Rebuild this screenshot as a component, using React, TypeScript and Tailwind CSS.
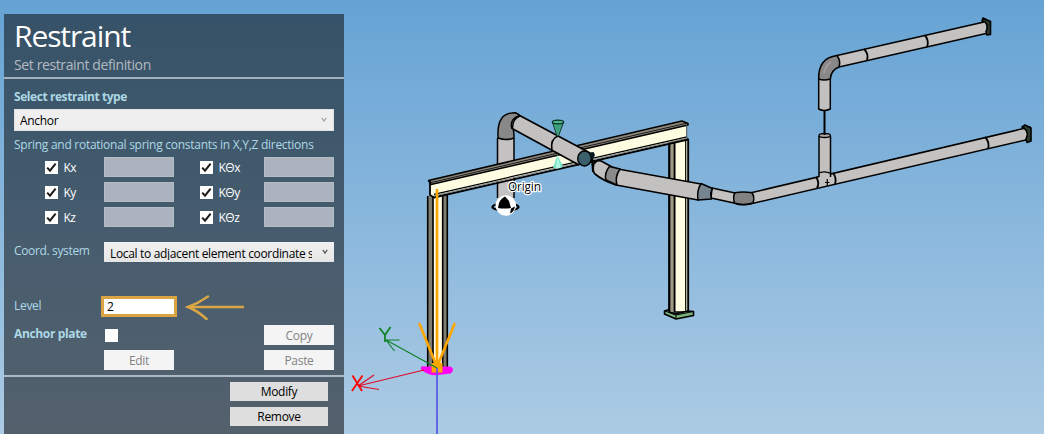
import React from "react";

function CheckBox({ checked = false }: { checked?: boolean }) {
  return (
    <span className="flex h-[13px] w-[13px] shrink-0 items-center justify-center bg-white">
      {checked && (
        <svg width="11" height="11" viewBox="0 0 11 11" fill="none" stroke="#1c1c1c" strokeWidth="2">
          <path d="M1.2 5.6 L4 8.6 L9.6 1.6" />
        </svg>
      )}
    </span>
  );
}

function SpringRow({ axis }: { axis: string }) {
  return (
    <div className="grid h-5 grid-cols-[90px_70px_90px_70px] items-center text-[12px] text-white">
      <span className="flex items-center gap-[6px] pl-[30.5px]">
        <CheckBox checked />
        <span className="pt-[2px] tracking-[-0.6px]">{"K" + axis}</span>
      </span>
      <span className="h-5 border border-[#b4bcc4] bg-[#abb4be]" />
      <span className="flex items-center gap-[6px] pl-[25.5px]">
        <CheckBox checked />
        <span className="pt-[2px] tracking-[-0.5px]">{"KΘ" + axis}</span>
      </span>
      <span className="h-5 border border-[#b4bcc4] bg-[#abb4be]" />
    </div>
  );
}

function Chevron({ color }: { color: string }) {
  return (
    <svg className="shrink-0" width="6" height="6" viewBox="0 0 6 6" fill="none" stroke={color} strokeWidth="1.2">
      <path d="M0.8 0.8 L3 4.2 L5.2 0.8" />
    </svg>
  );
}

function SmallButton({ label }: { label: string }) {
  return (
    <button className="flex h-5 w-[70px] items-center justify-center bg-[#f4f4f4] pt-[1px] text-[12px] tracking-[-0.3px] text-[#838383]">
      {label}
    </button>
  );
}

function Panel() {
  return (
    <section className="mt-[14px] ml-1 flex h-[420px] w-[340px] shrink-0 flex-col bg-linear-to-b from-[#365268] via-[#465c6e] to-[#54616d]">
      <header className="h-[63px] pl-[10px]">
        <h1 className="h-[42px] text-[30px] leading-[43px] tracking-[-1.1px] text-white">Restraint</h1>
        <p className="text-[14px] leading-[17px] tracking-[-0.38px] text-[#b3bac1]">Set restraint definition</p>
      </header>
      <div className="h-[2px] shrink-0 bg-[#a4b1bd]" />

      <div className="h-[296px] px-[10px] text-[#add8e6]">
        <h2 className="pt-[9px] text-[12px] leading-[18px] font-bold tracking-[-0.43px]">Select restraint type</h2>
        <div className="mt-[3px] flex h-[22px] items-center justify-between border border-[#e0e2e4] bg-[#efefef] pr-[6px] pl-[5px] text-[12px] text-black">
          <span className="pt-[2px] tracking-[-0.3px]">Anchor</span>
          <Chevron color="#a8a8a8" />
        </div>
        <p className="h-[26px] pt-[5px] text-[12px] leading-[18px] tracking-[-0.27px] whitespace-nowrap">
          Spring and rotational spring constants in X,Y,Z directions
        </p>
        <div className="flex flex-col gap-[5px]">
          <SpringRow axis="x" />
          <SpringRow axis="y" />
          <SpringRow axis="z" />
        </div>
        <div className="mt-[15px] grid h-5 grid-cols-[90px_230px]">
          <span className="text-[12px] leading-[18px] tracking-[-0.35px]">Coord. system</span>
          <div className="flex h-5 items-center justify-between bg-linear-to-b from-[#f1f1f1] to-[#e5e5e5] pr-[6px] pl-[6px] text-black">
            <span className="h-[15px] w-[202px] overflow-hidden text-[12px] leading-[18px] tracking-[-0.33px] whitespace-nowrap">
              Local to adjacent element coordinate system
            </span>
            <Chevron color="#555555" />
          </div>
        </div>
        <div className="mt-[33px] flex h-[23px] items-center">
          <span className="w-[87px] pb-[1px] text-[12px] leading-[18px] tracking-[-0.3px]">Level</span>
          <div className="flex h-[21px] w-[76px] items-center border-[3px] border-[#d9a441] bg-white pl-[3px] text-[12px] text-black">
            2
          </div>
          <svg className="ml-[8px]" width="60" height="28" viewBox="0 0 60 28" fill="none" stroke="#daa645" strokeWidth="2.5" strokeLinecap="round">
            <path d="M3 14 H58 M23 3.500 Q13 10.500 3 14 Q13 18 21.500 26" />
          </svg>
        </div>
        <div className="mt-[7px] grid h-5 grid-cols-[91px_159px_70px]">
          <span className="text-[12px] leading-[18px] font-bold tracking-[-0.35px]">Anchor plate</span>
          <span className="pt-1"><CheckBox /></span>
          <SmallButton label="Copy" />
        </div>
        <div className="mt-[5px] flex justify-between pl-[90px]">
          <SmallButton label="Edit" />
          <SmallButton label="Paste" />
        </div>
      </div>
      <div className="h-[2px] shrink-0 bg-[#adb8c5]" />
      <footer className="flex flex-col items-end gap-[6px] pt-[5px] pr-4 text-[12px] tracking-[-0.3px] text-black">
        <button className="flex h-[19px] w-[98px] items-center justify-center bg-[#dedede] pt-[1px]">Modify</button>
        <button className="flex h-[19px] w-[98px] items-center justify-center bg-[#dedede] pt-[1px]">Remove</button>
      </footer>
    </section>
  );
}

function Scene() {
  return (
    <svg className="block shrink-0" width="700" height="434" viewBox="344 0 700 434" strokeLinejoin="round">
      {/* riser below the start elbow */}
      <path d="M497.500 138 H514 V207 H497.500 Z" fill="#c3c1c1" />
      <path d="M497.500 138 V198 M514 138 V198" stroke="#000" strokeWidth="1.500" />

      {/* right column */}
      <path d="M669 143 L688 139 V312 H669 Z" fill="#fffde1" stroke="#000" strokeWidth="1.500" />
      <path d="M669.500 143 H675 V312 H669.500 Z" fill="#c9c3ad" />
      <path d="M669.500 143 V312 M674.500 142 V312" stroke="#000" strokeWidth="2" />
      <path d="M672 143 V312" stroke="#54503f" strokeWidth="0.700" />
      <path d="M685.700 139 V311 M688.500 139 V310" stroke="#000" strokeWidth="1.200" />
      <path d="M664.500 311 L669 309.500 V312 L675 314 L688 311 L693.500 311.500 V315.500 L676 319 L664.500 314 Z" fill="#79b07b" stroke="#000" strokeWidth="1.600" />
      <path d="M665 311 L676 315 L693 311.500 M676 315 V319" fill="none" stroke="#000" strokeWidth="1" />

      {/* left column */}
      <path d="M427.500 196 H447.500 V369 H427.500 Z" fill="#fffbe0" />
      <path d="M428 196 H433 V369 H428 Z M443 196 H447 V369 H443 Z" fill="#7f7c70" />
      <path d="M427.700 196 V369 M433 196 V369 M442.700 195 V369 M447.300 194 V369" stroke="#000" strokeWidth="1.600" />

      {/* beam */}
      <path d="M429.500 181 L686.500 124 V138 L430 196.500 Z" fill="#fffde1" />
      <path d="M428.500 180.500 L682 121 L688 123.500 V125 L431 184.500 Z" fill="#8b877c" stroke="#000" strokeWidth="1.500" />
      <path d="M430 182.800 L686 123.300" stroke="#000" strokeWidth="0.800" />
      <path d="M430 181 V195 L434 197.500 L688 139.500" fill="none" stroke="#000" strokeWidth="1.800" />
      <path d="M434 194.300 L687 136.800" stroke="#000" strokeWidth="1.200" />
      <path d="M434 195.900 L687 138.300" stroke="#8b877c" strokeWidth="0.900" />
      <path d="M686.700 125 V138" stroke="#55524a" strokeWidth="1" />

      {/* lower restraint cone */}
      <path d="M557.500 155 L553 167.500 Q558 170 563 166.500 Z" fill="#7ae8cc" />
      <path d="M557.500 155 L556 168.500 L560.500 168 Z" fill="#b4f6e6" />

      {/* start elbow and descending pipe */}
      <path d="M516 113 L590 153 L583 166 L579 164 L511 128 Z" fill="#c3c0c0" />
      <path d="M515 113 L590 153 M513 129 L579 165" stroke="#000" strokeWidth="1.700" />
      <path d="M498 138 V131 Q499 114 512 113 Q517 112 520 116 Q513 118 512.500 128 Q514 130 514 138 Q506 141 498 138 Z" fill="#888" stroke="#000" strokeWidth="1.500" />
      <path d="M520 115.500 Q509 119 512 129" fill="none" stroke="#000" strokeWidth="1.500" />
      <path d="M558 136 Q550 139 552 150" fill="none" stroke="#000" strokeWidth="1.500" />
      <ellipse cx="584.500" cy="158.500" rx="6.800" ry="7.500" fill="#3b606b" stroke="#000" strokeWidth="1.400" />
      <path d="M589 152.500 L593.500 152 L595 155 L592.500 160 L590 157 Z" fill="#07191c" />

      {/* upper restraint cone */}
      <path d="M552.500 122.500 L557 136 H558.500 L563.500 122.500 Z" fill="#3fa17d" stroke="#193e31" strokeWidth="1" />
      <ellipse cx="558" cy="122" rx="5.700" ry="1.900" fill="#4db48d" stroke="#082c20" strokeWidth="1.200" />

      {/* pipe toward the reducer */}
      <path d="M594 163 Q598 159 603 162 L612 167 L618 169 L701 184 L698 200 L616 185 Q602 180 595 174 Q592 171 594 163 Z" fill="#c3c0c0" stroke="#000" strokeWidth="1.700" />
      <path d="M609.500 166.500 L620 169 Q614.500 177 617 185 L606 180 Q604 173 609.500 166.500 Z" fill="#8b8a8b" stroke="#000" strokeWidth="1.500" />
      <path d="M592 159 L593 172" stroke="#000" strokeWidth="2" />
      <path d="M591 160 L596 163" stroke="#000" strokeWidth="2" />

      {/* reducer, bend and main run */}
      <path d="M712 188 L735 193 H750 L1030 127 V139 L750 204 Q742 206 734 203 L711 198 Z" fill="#c4c1c1" stroke="#000" strokeWidth="1.600" />
      <path d="M701 183.500 L712.500 188.500 Q709.500 193 711.500 199 L698 200 Q696.500 191 701 183.500 Z" fill="#778591" stroke="#000" strokeWidth="1.500" />
      <path d="M735 192.700 Q743 191.500 752 192.700 Q755 197 753 203 Q743 206 734.500 203 Q732.500 197 735 192.700 Z" fill="#838282" stroke="#000" strokeWidth="1.500" />
      <path d="M985 137 Q990 142 988 149 M816 177 Q820 183 817 188 M833 173 Q837 178 835 184" fill="none" stroke="#000" strokeWidth="1.800" />
      <path d="M1022 127 L1025 125 L1031 128 V141 L1027 142.500 L1026 139 Q1029 133 1025 129 Z" fill="#293c2d" stroke="#000" strokeWidth="1.600" />

      {/* vertical branch */}
      <path d="M819 136 V179 H830 V136 Z" fill="#c2bfbf" />
      <path d="M819 136 V177 M830.500 136 V177" stroke="#000" strokeWidth="1.500" />
      <path d="M819 173 Q825 170.500 831 173.500" fill="none" stroke="#000" strokeWidth="1.300" />
      <ellipse cx="824.700" cy="135.500" rx="5.700" ry="2" fill="#aaa8a8" stroke="#000" strokeWidth="1.300" />
      <path d="M824.500 111 V135" stroke="#000" strokeWidth="2" />
      <path d="M827.300 179 V186 M825 182.500 H829.500" stroke="#000" strokeWidth="1.200" />

      {/* upper run */}
      <path d="M837 55 L986 22 V34 L839 67 Z" fill="#c4c1c1" />
      <path d="M837 55.500 L984 22 M839 67 L986 33.500" stroke="#000" strokeWidth="1.600" />
      <path d="M818.700 79 V109 Q824 112 830.300 109 V79 Z" fill="#c3c0c0" stroke="#000" strokeWidth="1.500" />
      <path d="M818.700 79 Q818 58 837 55.500 Q841 61 839 67 Q831 70 830.300 79 Q824 81 818.700 79 Z" fill="#898787" stroke="#000" strokeWidth="1.600" />
      <path d="M824 73 Q826 65 831 62" fill="none" stroke="#a09d9b" strokeWidth="2" />
      <path d="M864 49 Q869 54 867 60 M924.500 35 Q929.500 40 927 47" fill="none" stroke="#000" strokeWidth="1.800" />
      <path d="M982 21 L983 18 L990.500 21.500 V34.500 L987 35 L986 31.500 Q989 26 985 22 Z" fill="#293c2d" stroke="#000" strokeWidth="1.600" />

      {/* origin marker */}
      <ellipse cx="505.500" cy="207" rx="13" ry="3.500" fill="none" stroke="#000" strokeWidth="2.200" />
      <circle cx="505.800" cy="205.500" r="10.300" fill="#fff" />
      <path d="M498 208 Q499 199 505 196.500 L509 201 L511 208 Q504 209 498 208 Z M511 208.500 L515 206.500 Q514 212 510 213.500 Z" fill="#000" />
      <text x="508" y="191" fontFamily="Open Sans, Noto Sans, sans-serif" fontSize="12" textLength="33" fill="#000" stroke="#fff" strokeWidth="2.500" paintOrder="stroke">Origin</text>

      {/* anchor and axes */}
      <path d="M425.500 368 Q421.500 367 422.500 369 Q430 374.500 438 373.500 L450 372 Q453 369.500 450 368 Z" fill="#ff00f2" stroke="#ff00f2" strokeWidth="3" />
      <path d="M437 189 V368" stroke="#ffa500" strokeWidth="2.600" />
      <path d="M419.500 324 L437 367 L454.500 324" fill="none" stroke="#ffa500" strokeWidth="2.600" strokeLinecap="round" />
      <path d="M431.500 363 H442.500 V372.500 H431.500 Z" fill="#ffa500" />
      <path d="M437 368 L386 340 M386 340 L399.500 340 M386 340 L394.500 351" fill="none" stroke="#108026" strokeWidth="1.200" />
      <path d="M379.500 328 L385 335 L390.500 327 M385 335 V342" fill="none" stroke="#108026" strokeWidth="1.800" />
      <path d="M424 370 L358 386 M358 386 L374 375 M358 386 L379 389.500" fill="none" stroke="#e20c27" strokeWidth="1.200" />
      <path d="M352.500 375.500 L362 391 M362.500 375.500 L352 391" fill="none" stroke="#ff0000" strokeWidth="1.800" />
      <path d="M437 368 V434" stroke="#5657e6" strokeWidth="1.700" />
    </svg>
  );
}

export default function App() {
  return (
    <main className="flex h-[434px] w-[1044px] overflow-hidden bg-linear-to-b from-[#65a3d4] to-[#accbe4] font-['Open_Sans','Noto_Sans',sans-serif]">
      <Panel />
      <Scene />
    </main>
  );
}
